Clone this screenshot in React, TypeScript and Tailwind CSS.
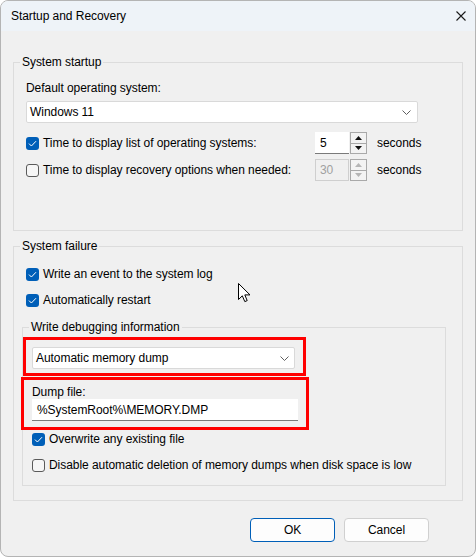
import React from 'react';

const font = { fontFamily: '"Liberation Sans", Arial, sans-serif' };

const Check = ({ checked }: { checked: boolean }) =>
  checked ? (
    <span className="w-[13px] h-[13px] rounded-[3px] bg-[#005fb8] flex items-center justify-center shrink-0">
      <svg width="9" height="7" viewBox="0 0 9 7">
        <path d="M1 3.6 L3.4 6 L8 1.2" stroke="#ffffff" strokeWidth="1" fill="none" />
      </svg>
    </span>
  ) : (
    <span className="w-[13px] h-[13px] rounded-[3px] border border-[#5a5a5a] bg-[#f6f6f6] shrink-0" />
  );

const Chevron = () => (
  <svg width="9" height="5" viewBox="0 0 9 5">
    <path d="M0.5 0.5 L4.5 4.5 L8.5 0.5" stroke="#5f5f5f" strokeWidth="1" fill="none" />
  </svg>
);

const Arrow = ({ up, dim }: { up: boolean; dim?: boolean }) => (
  <svg width="7" height="4" viewBox="0 0 7 4">
    <path d={up ? 'M0 4 L3.5 0 L7 4 Z' : 'M0 0 L7 0 L3.5 4 Z'} fill={dim ? '#b5b5b5' : '#111111'} />
  </svg>
);

const Legend = ({ children }: { children: React.ReactNode }) => (
  <span className="block w-fit -mt-[8px] ml-[6px] px-[2px] bg-[#f0f0f0] leading-[14px]">{children}</span>
);

const Spinner = ({ value, disabled }: { value: string; disabled?: boolean }) => (
  <div className="flex items-center">
    <div
      className={
        disabled
          ? 'w-[34px] h-[22px] border border-[#cfcfcf] bg-[#f0f0f0] pl-[4px] flex items-center text-[#a0a0a0]'
          : 'w-[34px] h-[22px] bg-white border-b border-[#7a7a7a] pl-[5px] flex items-center'
      }
    >
      {value}
    </div>
    <div className="ml-[1px] w-[17px] h-[22px] flex flex-col border border-[#a9a9a9] bg-[#f3f3f3]">
      <div className="flex-1 flex items-center justify-center border-b border-[#a9a9a9]">
        <Arrow up dim={disabled} />
      </div>
      <div className="flex-1 flex items-center justify-center">
        <Arrow up={false} dim={disabled} />
      </div>
    </div>
    <span className="ml-[10px]">seconds</span>
  </div>
);

export default function App() {
  return (
    <div
      className="relative w-[476px] h-[557px] border border-[#b4b4b4] rounded-[8px] overflow-hidden bg-[#f0f0f0] text-[12px] tracking-[-0.05px] text-black flex flex-col"
      style={font}
    >
      {/* Title bar */}
      <div className="h-[30px] bg-[#eef3f8] flex items-center justify-between pl-[10px] pr-[9px]">
        <span>Startup and Recovery</span>
        <svg width="10" height="10" viewBox="0 0 10 10">
          <path d="M0.5 0.5 L9.5 9.5 M9.5 0.5 L0.5 9.5" stroke="#1a1a1a" strokeWidth="1.1" />
        </svg>
      </div>

      <div className="px-[12px] flex flex-col">
        {/* System startup */}
        <div className="mt-[31px] h-[169px] border border-[#dcdcdc]">
          <Legend>System startup</Legend>
          <div className="px-[12px] flex flex-col">
            <div className="mt-[11px] leading-[16px]">Default operating system:</div>
            <div className="mt-[5px] w-[392px] h-[22px] bg-white border border-[#d9d9d9] rounded-[2px] flex items-center justify-between pl-[3px] pr-[6px]">
              <span>Windows 11</span>
              <Chevron />
            </div>
            <div className="mt-[9px] h-[22px] flex items-center">
              <div className="w-[289px] flex items-center gap-[4px]">
                <Check checked />
                <span>Time to display list of operating systems:</span>
              </div>
              <Spinner value="5" />
            </div>
            <div className="mt-[5px] h-[22px] flex items-center">
              <div className="w-[289px] flex items-center gap-[4px]">
                <Check checked={false} />
                <span>Time to display recovery options when needed:</span>
              </div>
              <Spinner value="30" disabled />
            </div>
          </div>
        </div>

        {/* System failure */}
        <div className="mt-[15px] border border-[#dcdcdc] pb-[14px]">
          <Legend>System failure</Legend>
          <div className="px-[12px] flex flex-col">
            <div className="mt-[13px] h-[16px] flex items-center gap-[4px]">
              <Check checked />
              <span>Write an event to the system log</span>
            </div>
            <div className="mt-[10px] h-[16px] flex items-center gap-[4px]">
              <Check checked />
              <span>Automatically restart</span>
            </div>
          </div>

          {/* Write debugging information */}
          <div className="mt-[19px] ml-[8px] w-[424px] border border-[#dcdcdc] pb-[12px]">
            <Legend>Write debugging information</Legend>
            <div className="flex flex-col">
              <div className="mt-[3px] w-[283px] h-[39px] border-[3px] border-[#ff0000] pl-[6px] pt-[7px]">
                <div className="w-[263px] h-[22px] bg-white border border-[#d9d9d9] rounded-[2px] flex items-center justify-between pl-[3px] pr-[5px]">
                  <span>Automatic memory dump</span>
                  <Chevron />
                </div>
              </div>
              <div className="mt-[1px] -ml-[2px] w-[288px] h-[53px] border-[3px] border-[#ff0000] pl-[8px] pt-[5px] flex flex-col">
                <span className="leading-[14px]">Dump file:</span>
                <div className="w-[266px] h-[22px] bg-white border-b border-[#7a7a7a] pl-[5px] flex items-center">
                  %SystemRoot%\MEMORY.DMP
                </div>
              </div>
              <div className="mt-[1px] ml-[9px] h-[16px] flex items-center gap-[4px]">
                <Check checked />
                <span>Overwrite any existing file</span>
              </div>
              <div className="mt-[10px] ml-[9px] h-[16px] flex items-center gap-[4px]">
                <Check checked={false} />
                <span>Disable automatic deletion of memory dumps when disk space is low</span>
              </div>
            </div>
          </div>
        </div>

        {/* Buttons */}
        <div className="mt-[17px] flex justify-end gap-[9px] pr-[34px]">
          <button className="w-[85px] h-[24px] rounded-[4px] bg-[#fdfdfd] border border-[#005fb8]">OK</button>
          <button className="w-[85px] h-[24px] rounded-[4px] bg-[#fdfdfd] border border-[#d0d0d0]">Cancel</button>
        </div>
      </div>

      {/* mouse pointer */}
      <svg className="absolute left-[237px] top-[282px]" width="13" height="20" viewBox="0 0 13 20">
        <path
          d="M0.5 0.5 L0.5 16.5 L4.3 12.8 L6.8 18.6 L9.2 17.6 L6.8 11.9 L12 11.9 Z"
          fill="#ffffff"
          stroke="#000000"
          strokeWidth="1"
        />
      </svg>
    </div>
  );
}
